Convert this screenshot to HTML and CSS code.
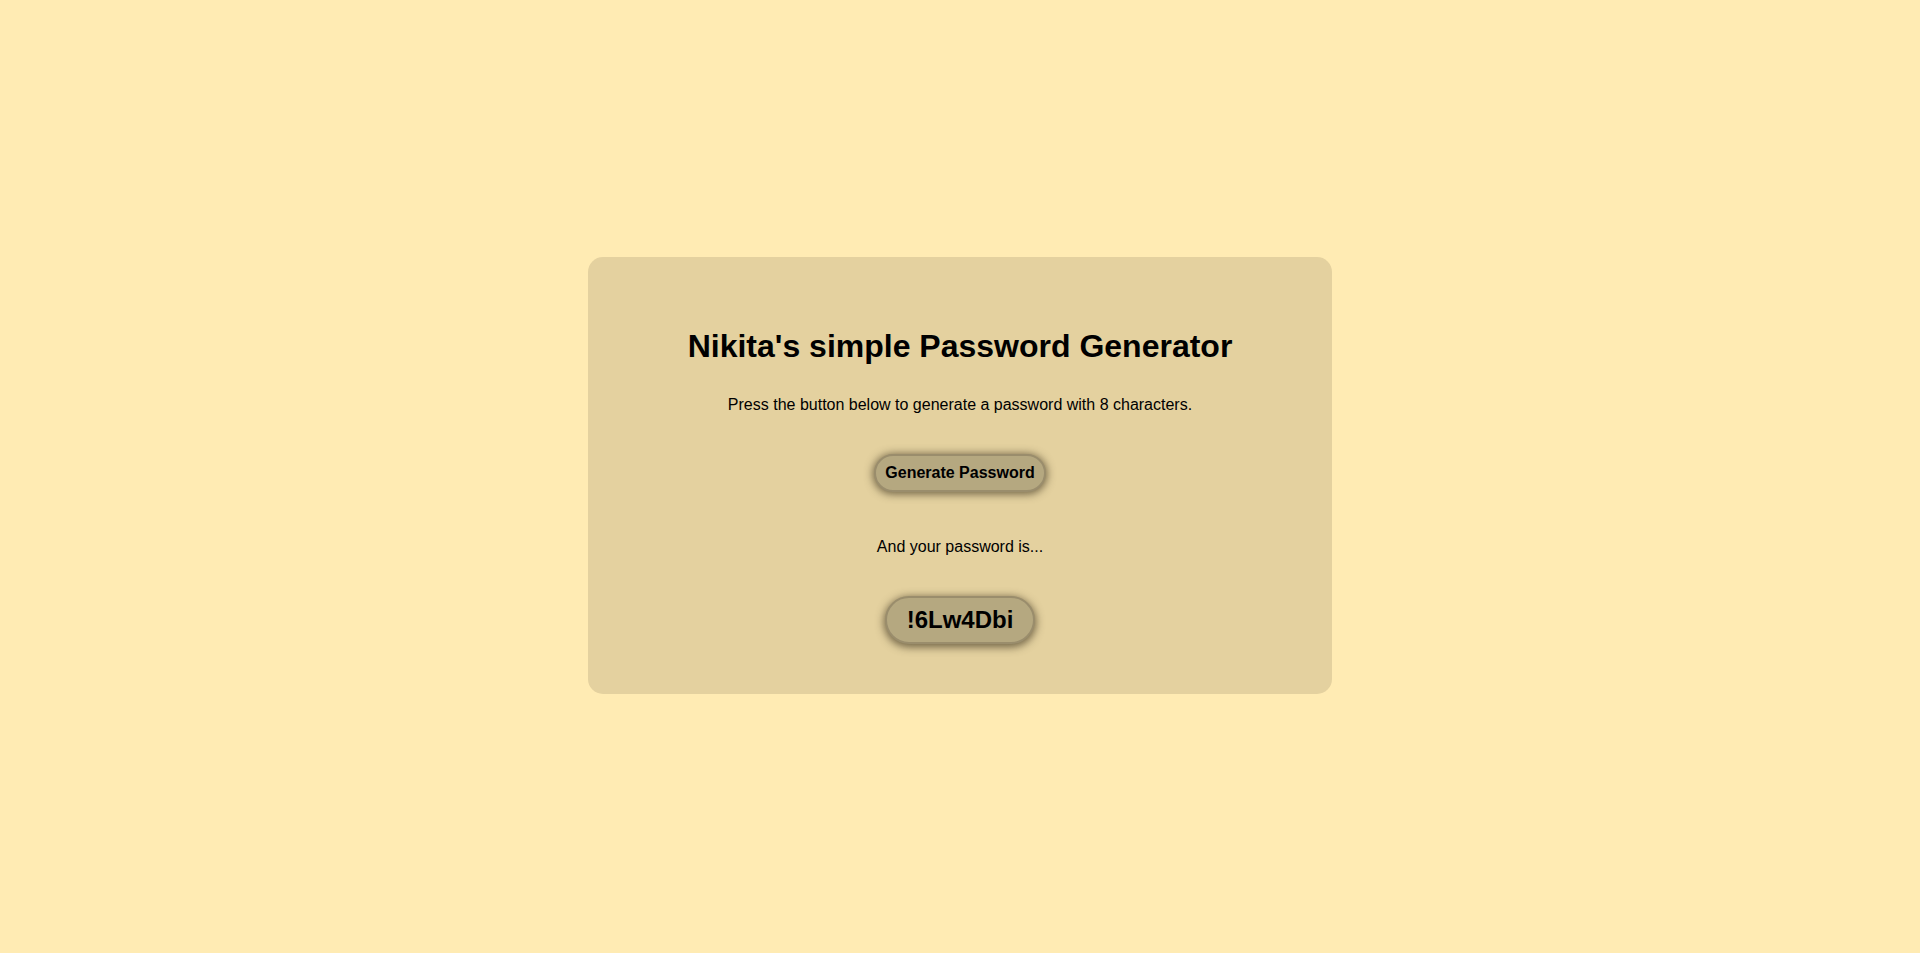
FILE: index.html
```html
<!DOCTYPE html>
<html lang="en">
<head>
<meta charset="utf-8">
<title>Password Generator</title>
<link rel="stylesheet" href="styles.css">
</head>
<body>
<main class="card">
  <h1 class="title">Nikita's simple Password Generator</h1>
  <p class="lead">Press the button below to generate a password with 8 characters.</p>
  <button class="gen-btn" type="button">Generate Password</button>
  <p class="result-label">And your password is...</p>
  <div class="password">!6Lw4Dbi</div>
</main>
</body>
</html>
```
FILE: styles.css
```css
html, body {
  margin: 0;
  height: 100%;
}
body {
  box-sizing: border-box;
  padding-bottom: 2px;
  background: #ffebb3;
  font-family: "Liberation Sans", Arial, sans-serif;
  color: #000;
  display: flex;
  align-items: center;
  justify-content: center;
}
.card {
  width: 744px;
  box-sizing: border-box;
  background: #e4d19f;
  border-radius: 15px;
  padding: 71px 20px 50px;
  display: flex;
  flex-direction: column;
  align-items: center;
  text-align: center;
}
.title {
  margin: 0;
  font-size: 32px;
  line-height: 37px;
  font-weight: bold;
}
.lead {
  margin: 31px 0 0;
  font-size: 16px;
  line-height: 18px;
}
.gen-btn {
  margin-top: 40px;
  height: 38px;
  width: 172px;
  box-sizing: border-box;
  padding: 0;
  font-family: inherit;
  font-size: 16px;
  font-weight: bold;
  color: #000;
  background: #b5a880;
  border: 2px solid #9a8d6c;
  border-radius: 19px;
  box-shadow: 0 1px 8px 1px rgba(60, 50, 30, 0.7);
}
.result-label {
  margin: 46px 0 0;
  font-size: 16px;
  line-height: 18px;
}
.password {
  margin-top: 40px;
  height: 48px;
  width: 150px;
  box-sizing: border-box;
  display: flex;
  align-items: center;
  justify-content: center;
  font-size: 24px;
  font-weight: bold;
  background: #b5a880;
  border: 2px solid #9a8d6c;
  border-radius: 24px;
  box-shadow: 0 2px 8px 1px rgba(60, 50, 30, 0.7);
}
```
